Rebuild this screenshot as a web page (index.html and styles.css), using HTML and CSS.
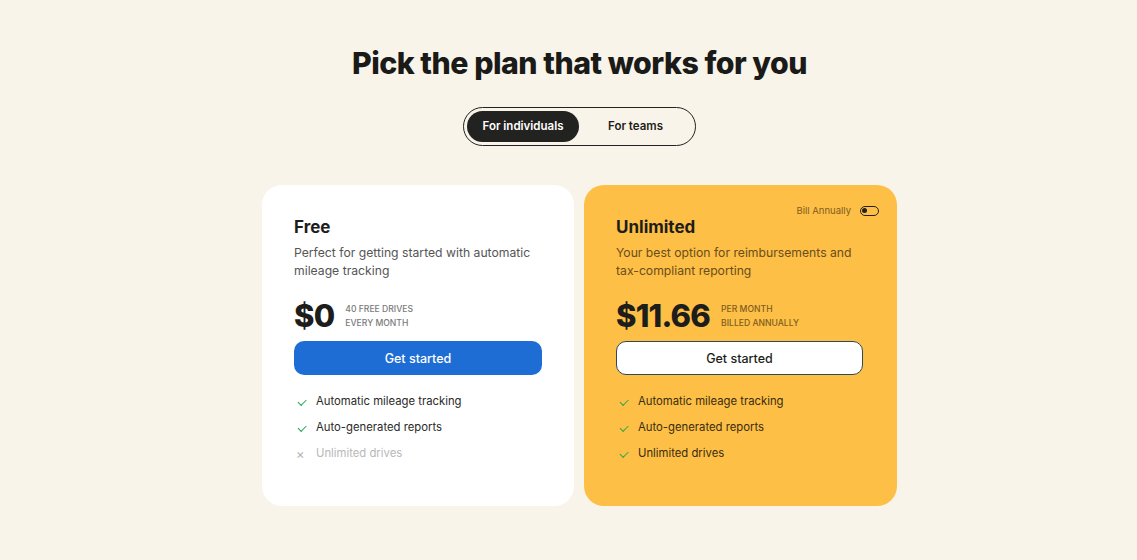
FILE: index.html
```html
<!DOCTYPE html>
<html lang="en">

<head>
    <meta charset="UTF-8">
    <meta name="viewport" content="width=device-width, initial-scale=1.0">
    <title>Pricing</title>
    <link rel="stylesheet" href="styles.css">
</head>

<body>
    <div class="page">
        <h1>Pick the plan that works for you</h1>

        <div class="tabs">
            <button class="tab active">For individuals</button>
            <button class="tab">For teams</button>
        </div>

        <div class="plans">
            <div class="card free">
                <h2>Free</h2>
                <p class="desc">Perfect for getting started with automatic mileage tracking</p>
                <div class="price-row">
                    <span class="price">$0</span>
                    <span class="price-note">40 free drives<br>every month</span>
                </div>
                <button class="cta primary">Get started</button>
                <ul class="features">
                    <li><span class="icon check"></span>Automatic mileage tracking</li>
                    <li><span class="icon check"></span>Auto-generated reports</li>
                    <li class="off"><span class="icon cross">&times;</span>Unlimited drives</li>
                </ul>
            </div>

            <div class="card unlimited">
                <div class="bill">
                    <span>Bill Annually</span>
                    <span class="switch"><span class="knob"></span></span>
                </div>
                <h2>Unlimited</h2>
                <p class="desc">Your best option for reimbursements and tax-compliant reporting</p>
                <div class="price-row">
                    <span class="price">$11.66</span>
                    <span class="price-note">Per month<br>billed annually</span>
                </div>
                <button class="cta outline">Get started</button>
                <ul class="features">
                    <li><span class="icon check"></span>Automatic mileage tracking</li>
                    <li><span class="icon check"></span>Auto-generated reports</li>
                    <li><span class="icon check"></span>Unlimited drives</li>
                </ul>
            </div>
        </div>
    </div>
</body>

</html>
```

FILE: styles.css
```css
* {
    margin: 0;
    padding: 0;
    box-sizing: border-box;
}

body {
    font-family: Inter, "Noto Sans", sans-serif;
    background-color: #f8f4e9;
    color: #1d1d1b;
}

.page {
    display: flex;
    flex-direction: column;
    align-items: center;
    padding-top: 44px;
    padding-left: 22px;
    height: 560px;
}

h1 {
    font-size: 30.3px;
    font-weight: 800;
    letter-spacing: -0.5px;
    line-height: 38px;
    color: #1a1a18;
}

.tabs {
    margin-top: 25px;
    width: 233px;
    height: 39px;
    border: 1px solid #222;
    border-radius: 20px;
    padding: 3px;
    display: flex;
}

.tab {
    font-family: inherit;
    font-size: 11.5px;
    font-weight: 600;
    border: none;
    background: none;
    color: #1d1d1b;
    border-radius: 16px;
    cursor: pointer;
    height: 31px;
    padding-bottom: 1px;
}

.tab:first-child {
    width: 112px;
}

.tab:last-child {
    flex: 1;
}

.tab.active {
    background-color: #222220;
    color: #fff;
}

.plans {
    display: flex;
    gap: 10px;
    margin-top: 39px;
}

.card {
    width: 312px;
    height: 321px;
    border-radius: 20px;
    padding: 31px 32px;
    position: relative;
}

.card.free {
    background-color: #fff;
}

.card.unlimited {
    width: 313px;
    background-color: #fdbf45;
}

h2 {
    font-size: 17px;
    font-weight: 700;
    line-height: 22px;
}

.desc {
    margin-top: 6px;
    font-size: 12.2px;
    line-height: 18px;
    color: #555;
    width: 240px;
}

.unlimited .desc {
    color: #6a4d1c;
}

.price-row {
    margin-top: 18px;
    display: flex;
    align-items: center;
    gap: 11px;
}

.price {
    font-size: 31px;
    font-weight: 800;
    letter-spacing: -0.8px;
    line-height: 36px;
}

.price-note {
    font-size: 8.6px;
    font-weight: 500;
    text-transform: uppercase;
    line-height: 14px;
    color: #7a7a7a;
}

.unlimited .price-note {
    color: #7d5d22;
}

.cta {
    margin-top: 7px;
    width: 248px;
    height: 34px;
    border-radius: 10px;
    font-family: inherit;
    font-size: 12.5px;
    font-weight: 500;
    cursor: pointer;
}

.cta.primary {
    background-color: #1e6dd5;
    color: #fff;
    border: none;
}

.cta.outline {
    width: 247px;
    background-color: #fff;
    color: #1d1d1b;
    border: 1px solid #2f4a57;
}

.features {
    list-style: none;
    margin-top: 13px;
}

.features li {
    display: flex;
    align-items: center;
    font-size: 11.3px;
    line-height: 16px;
    height: 26px;
    color: #2a2a28;
}

.unlimited .features li {
    color: #3a2c10;
}

.features li.off {
    color: #b8b8b8;
}

.icon {
    width: 22px;
    height: 16px;
    position: relative;
    flex-shrink: 0;
}

.icon.check::after {
    content: "";
    position: absolute;
    left: 4px;
    top: 6px;
    width: 7px;
    height: 3.5px;
    border-left: 1.5px solid #27a35a;
    border-bottom: 1.5px solid #27a35a;
    transform: rotate(-45deg);
}

.unlimited .icon.check::after {
    border-color: #3aa64a;
}

.icon.cross {
    color: #b5b5b5;
    font-size: 13px;
    line-height: 19px;
    padding-left: 2px;
}

.bill {
    position: absolute;
    top: 20px;
    right: 18px;
    display: flex;
    align-items: center;
    gap: 9px;
    font-size: 9.5px;
    color: #7d5d22;
}

.switch {
    width: 19px;
    height: 10px;
    border: 1.5px solid #222;
    border-radius: 6px;
    position: relative;
}

.knob {
    position: absolute;
    left: 1px;
    top: 1px;
    width: 5px;
    height: 5px;
    border-radius: 50%;
    background-color: #222;
}
```
